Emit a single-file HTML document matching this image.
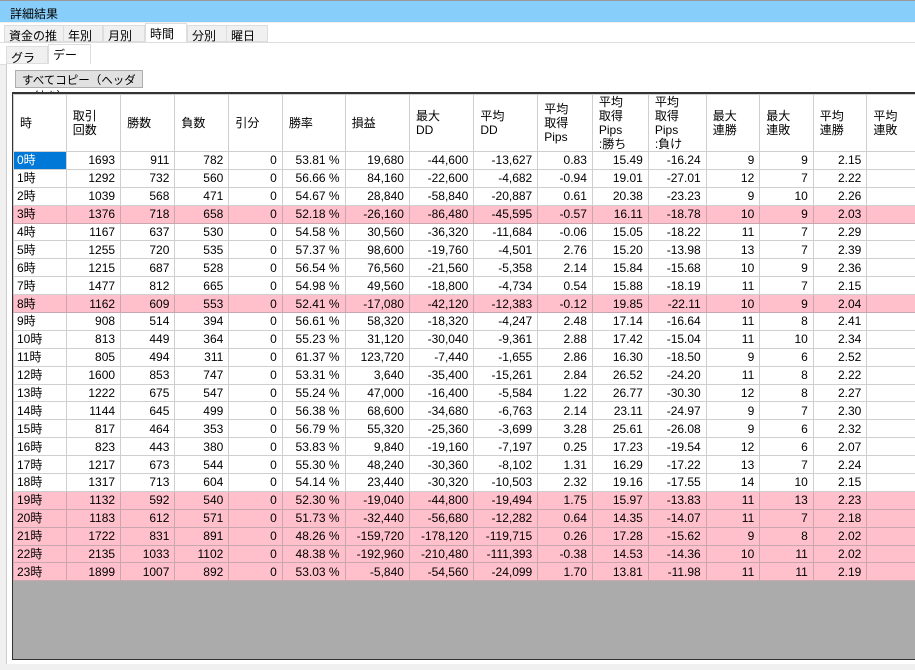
<!DOCTYPE html><html><head><meta charset="utf-8"><style>
body{margin:0;width:915px;height:670px;overflow:hidden;background:#f0f0f0;font-family:"Liberation Sans","Noto Sans CJK JP",sans-serif;font-size:12px;color:#000;position:relative}
.title{position:absolute;left:0;top:0;width:915px;height:22px;background:#87cefa;border-top:1px solid #999;box-sizing:border-box;padding:4px 0 0 10px}
.tabs{position:absolute;left:0;top:23px;width:915px;height:19px;background:#fff;border-bottom:1px solid #ddd}
.tab{position:absolute;top:2px;height:17px;background:#f0f0f0;border:1px solid #ddd;box-sizing:border-box;padding:1px 4px}
.sub{position:absolute;left:0;top:43px;width:915px;height:21px;background:#fff;border-bottom:1px solid #ddd}
.panel{position:absolute;left:6px;top:64px;width:909px;height:600px;background:#fff;border-left:1px solid #ccc}
.btn{position:absolute;left:15px;top:70px;width:128px;height:18px;background:#e1e1e1;border:1px solid #adadad;box-sizing:border-box;padding:1px 6px;font-size:11.5px}
.grid{position:absolute;left:12px;top:92px;width:910px;height:568px;background:#ababab;border:1px solid #333;border-top:2px solid #333;box-sizing:border-box;overflow:hidden}
table{border-collapse:collapse;table-layout:fixed;background:#fff}
td{width:58px;border:1px solid #cfcfcf;height:16.9px;padding:0 5px;text-align:right;white-space:nowrap;overflow:hidden;line-height:14px}
td:first-child{text-align:left;padding-left:3px}
tr.h td{height:56px;text-align:left;vertical-align:middle;line-height:14px;padding-left:6px}
tr.p td{background:#ffc0cb;border-color:#c8a8ae}
td.sel{background:#0078d7!important;color:#fff}
</style></head><body>
<div class="title">詳細結果</div>
<div class="tabs">
<div class="tab" style="left:4px;width:60px">資金の推移</div>
<div class="tab" style="left:63px;width:40px">年別</div>
<div class="tab" style="left:103px;width:42px">月別</div>
<div class="tab" style="left:145px;top:0;height:20px;width:42px;background:#fff">時間別</div>
<div class="tab" style="left:187px;width:40px">分別</div>
<div class="tab" style="left:226px;width:42px">曜日別</div>
</div>
<div class="sub">
<div class="tab" style="left:6px;top:3px;height:18px;width:42px;padding-top:2px">グラフ</div>
<div class="tab" style="left:48px;top:1px;height:21px;width:43px;background:#fff;border-bottom:none">データ</div>
</div>
<div class="panel"></div>
<div class="btn">すべてコピー（ヘッダー付き）</div>
<div class="grid"><table>
<tr class="h"><td>時</td><td>取引<br>回数</td><td>勝数</td><td>負数</td><td>引分</td><td>勝率</td><td>損益</td><td>最大<br>DD</td><td>平均<br>DD</td><td>平均<br>取得<br>Pips</td><td>平均<br>取得<br>Pips<br>:勝ち</td><td>平均<br>取得<br>Pips<br>:負け</td><td>最大<br>連勝</td><td>最大<br>連敗</td><td>平均<br>連勝</td><td>平均<br>連敗</td></tr>
<tr><td class="sel">0時</td><td>1693</td><td>911</td><td>782</td><td>0</td><td>53.81 %</td><td>19,680</td><td>-44,600</td><td>-13,627</td><td>0.83</td><td>15.49</td><td>-16.24</td><td>9</td><td>9</td><td>2.15</td><td></td></tr>
<tr><td>1時</td><td>1292</td><td>732</td><td>560</td><td>0</td><td>56.66 %</td><td>84,160</td><td>-22,600</td><td>-4,682</td><td>-0.94</td><td>19.01</td><td>-27.01</td><td>12</td><td>7</td><td>2.22</td><td></td></tr>
<tr><td>2時</td><td>1039</td><td>568</td><td>471</td><td>0</td><td>54.67 %</td><td>28,840</td><td>-58,840</td><td>-20,887</td><td>0.61</td><td>20.38</td><td>-23.23</td><td>9</td><td>10</td><td>2.26</td><td></td></tr>
<tr class="p"><td>3時</td><td>1376</td><td>718</td><td>658</td><td>0</td><td>52.18 %</td><td>-26,160</td><td>-86,480</td><td>-45,595</td><td>-0.57</td><td>16.11</td><td>-18.78</td><td>10</td><td>9</td><td>2.03</td><td></td></tr>
<tr><td>4時</td><td>1167</td><td>637</td><td>530</td><td>0</td><td>54.58 %</td><td>30,560</td><td>-36,320</td><td>-11,684</td><td>-0.06</td><td>15.05</td><td>-18.22</td><td>11</td><td>7</td><td>2.29</td><td></td></tr>
<tr><td>5時</td><td>1255</td><td>720</td><td>535</td><td>0</td><td>57.37 %</td><td>98,600</td><td>-19,760</td><td>-4,501</td><td>2.76</td><td>15.20</td><td>-13.98</td><td>13</td><td>7</td><td>2.39</td><td></td></tr>
<tr><td>6時</td><td>1215</td><td>687</td><td>528</td><td>0</td><td>56.54 %</td><td>76,560</td><td>-21,560</td><td>-5,358</td><td>2.14</td><td>15.84</td><td>-15.68</td><td>10</td><td>9</td><td>2.36</td><td></td></tr>
<tr><td>7時</td><td>1477</td><td>812</td><td>665</td><td>0</td><td>54.98 %</td><td>49,560</td><td>-18,800</td><td>-4,734</td><td>0.54</td><td>15.88</td><td>-18.19</td><td>11</td><td>7</td><td>2.15</td><td></td></tr>
<tr class="p"><td>8時</td><td>1162</td><td>609</td><td>553</td><td>0</td><td>52.41 %</td><td>-17,080</td><td>-42,120</td><td>-12,383</td><td>-0.12</td><td>19.85</td><td>-22.11</td><td>10</td><td>9</td><td>2.04</td><td></td></tr>
<tr><td>9時</td><td>908</td><td>514</td><td>394</td><td>0</td><td>56.61 %</td><td>58,320</td><td>-18,320</td><td>-4,247</td><td>2.48</td><td>17.14</td><td>-16.64</td><td>11</td><td>8</td><td>2.41</td><td></td></tr>
<tr><td>10時</td><td>813</td><td>449</td><td>364</td><td>0</td><td>55.23 %</td><td>31,120</td><td>-30,040</td><td>-9,361</td><td>2.88</td><td>17.42</td><td>-15.04</td><td>11</td><td>10</td><td>2.34</td><td></td></tr>
<tr><td>11時</td><td>805</td><td>494</td><td>311</td><td>0</td><td>61.37 %</td><td>123,720</td><td>-7,440</td><td>-1,655</td><td>2.86</td><td>16.30</td><td>-18.50</td><td>9</td><td>6</td><td>2.52</td><td></td></tr>
<tr><td>12時</td><td>1600</td><td>853</td><td>747</td><td>0</td><td>53.31 %</td><td>3,640</td><td>-35,400</td><td>-15,261</td><td>2.84</td><td>26.52</td><td>-24.20</td><td>11</td><td>8</td><td>2.22</td><td></td></tr>
<tr><td>13時</td><td>1222</td><td>675</td><td>547</td><td>0</td><td>55.24 %</td><td>47,000</td><td>-16,400</td><td>-5,584</td><td>1.22</td><td>26.77</td><td>-30.30</td><td>12</td><td>8</td><td>2.27</td><td></td></tr>
<tr><td>14時</td><td>1144</td><td>645</td><td>499</td><td>0</td><td>56.38 %</td><td>68,600</td><td>-34,680</td><td>-6,763</td><td>2.14</td><td>23.11</td><td>-24.97</td><td>9</td><td>7</td><td>2.30</td><td></td></tr>
<tr><td>15時</td><td>817</td><td>464</td><td>353</td><td>0</td><td>56.79 %</td><td>55,320</td><td>-25,360</td><td>-3,699</td><td>3.28</td><td>25.61</td><td>-26.08</td><td>9</td><td>6</td><td>2.32</td><td></td></tr>
<tr><td>16時</td><td>823</td><td>443</td><td>380</td><td>0</td><td>53.83 %</td><td>9,840</td><td>-19,160</td><td>-7,197</td><td>0.25</td><td>17.23</td><td>-19.54</td><td>12</td><td>6</td><td>2.07</td><td></td></tr>
<tr><td>17時</td><td>1217</td><td>673</td><td>544</td><td>0</td><td>55.30 %</td><td>48,240</td><td>-30,360</td><td>-8,102</td><td>1.31</td><td>16.29</td><td>-17.22</td><td>13</td><td>7</td><td>2.24</td><td></td></tr>
<tr><td>18時</td><td>1317</td><td>713</td><td>604</td><td>0</td><td>54.14 %</td><td>23,440</td><td>-30,320</td><td>-10,503</td><td>2.32</td><td>19.16</td><td>-17.55</td><td>14</td><td>10</td><td>2.15</td><td></td></tr>
<tr class="p"><td>19時</td><td>1132</td><td>592</td><td>540</td><td>0</td><td>52.30 %</td><td>-19,040</td><td>-44,800</td><td>-19,494</td><td>1.75</td><td>15.97</td><td>-13.83</td><td>11</td><td>13</td><td>2.23</td><td></td></tr>
<tr class="p"><td>20時</td><td>1183</td><td>612</td><td>571</td><td>0</td><td>51.73 %</td><td>-32,440</td><td>-56,680</td><td>-12,282</td><td>0.64</td><td>14.35</td><td>-14.07</td><td>11</td><td>7</td><td>2.18</td><td></td></tr>
<tr class="p"><td>21時</td><td>1722</td><td>831</td><td>891</td><td>0</td><td>48.26 %</td><td>-159,720</td><td>-178,120</td><td>-119,715</td><td>0.26</td><td>17.28</td><td>-15.62</td><td>9</td><td>8</td><td>2.02</td><td></td></tr>
<tr class="p"><td>22時</td><td>2135</td><td>1033</td><td>1102</td><td>0</td><td>48.38 %</td><td>-192,960</td><td>-210,480</td><td>-111,393</td><td>-0.38</td><td>14.53</td><td>-14.36</td><td>10</td><td>11</td><td>2.02</td><td></td></tr>
<tr class="p"><td>23時</td><td>1899</td><td>1007</td><td>892</td><td>0</td><td>53.03 %</td><td>-5,840</td><td>-54,560</td><td>-24,099</td><td>1.70</td><td>13.81</td><td>-11.98</td><td>11</td><td>11</td><td>2.19</td><td></td></tr>
</table></div>
</body></html>
